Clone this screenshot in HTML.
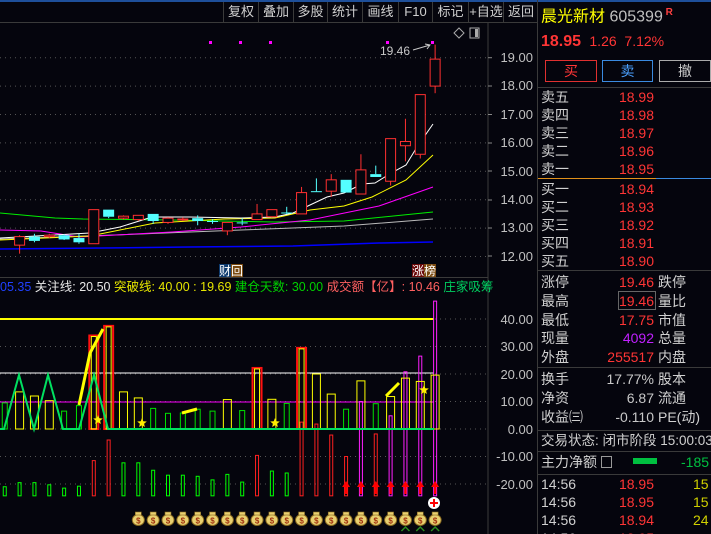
<!DOCTYPE html>
<html><head><meta charset="utf-8">
<style>
*{margin:0;padding:0;box-sizing:border-box}
html,body{width:711px;height:534px;overflow:hidden}
body{background:#05050d;position:relative;font-family:"Liberation Sans","Noto Sans CJK SC",sans-serif;color:#c8c8c8}
.a{position:absolute;white-space:nowrap;line-height:1}
.tb{position:absolute;top:2px;height:20px;font-size:13px;color:#d0d0d0;line-height:20px;text-align:center;border-left:1px solid #3a3a3a;white-space:nowrap}
.lab{position:absolute;left:541px;font-size:14px;color:#d0d0d0;line-height:1;white-space:nowrap}
.val{position:absolute;right:57px;font-size:14px;line-height:1;text-align:right;white-space:nowrap}
.lab2{position:absolute;left:658px;font-size:14px;color:#d0d0d0;line-height:1;white-space:nowrap}
.red{color:#ff3535}
</style></head><body>
<div class="a" style="left:0;top:0;width:711px;height:2px;background:#1e4f9a"></div>
<div class="a" style="left:0;top:22px;width:538px;height:1px;background:#3a3a3a"></div>
<div class="tb" style="left:223px;width:35px">复权</div>
<div class="tb" style="left:258px;width:35px">叠加</div>
<div class="tb" style="left:293px;width:34px">多股</div>
<div class="tb" style="left:327px;width:35px">统计</div>
<div class="tb" style="left:362px;width:36px">画线</div>
<div class="tb" style="left:398px;width:34px">F10</div>
<div class="tb" style="left:432px;width:36px">标记</div>
<div class="tb" style="left:468px;width:35px">+自选</div>
<div class="tb" style="left:503px;width:35px">返回</div>

<svg class="a" style="left:0;top:0" width="538" height="534" id="sv">
<line x1="488" y1="23" x2="488" y2="534" stroke="#3a3a3a"/>
<line x1="537.5" y1="0" x2="537.5" y2="534" stroke="#3a3a3a"/>
<line x1="0" y1="277.5" x2="488" y2="277.5" stroke="#3a3a3a"/>
<g stroke="#555" stroke-dasharray="1,4">
<line x1="0" y1="57.7" x2="488" y2="57.7"/><line x1="0" y1="86.1" x2="488" y2="86.1"/><line x1="0" y1="114.5" x2="488" y2="114.5"/><line x1="0" y1="142.9" x2="488" y2="142.9"/><line x1="0" y1="171.3" x2="488" y2="171.3"/><line x1="0" y1="199.7" x2="488" y2="199.7"/><line x1="0" y1="228.1" x2="488" y2="228.1"/><line x1="0" y1="256.5" x2="488" y2="256.5"/>
<line x1="0" y1="319" x2="488" y2="319"/><line x1="0" y1="346.5" x2="488" y2="346.5"/><line x1="0" y1="374" x2="488" y2="374"/><line x1="0" y1="401.5" x2="488" y2="401.5"/><line x1="0" y1="429" x2="488" y2="429"/><line x1="0" y1="456.5" x2="488" y2="456.5"/><line x1="0" y1="484" x2="488" y2="484"/>
</g>
<g fill="#c0c0c0" font-size="13" text-anchor="end" font-family="Liberation Sans">
<text x="533" y="62">19.00</text><text x="533" y="90">18.00</text><text x="533" y="119">17.00</text><text x="533" y="147">16.00</text><text x="533" y="176">15.00</text><text x="533" y="204">14.00</text><text x="533" y="232">13.00</text><text x="533" y="261">12.00</text>
<text x="533" y="324">40.00</text><text x="533" y="351">30.00</text><text x="533" y="379">20.00</text><text x="533" y="406">10.00</text><text x="533" y="434">0.00</text><text x="533" y="461">-10.00</text><text x="533" y="489">-20.00</text>
</g>
<g stroke="#888"><line x1="488" y1="57.7" x2="492" y2="57.7"/><line x1="488" y1="86" x2="492" y2="86"/><line x1="488" y1="114.5" x2="492" y2="114.5"/><line x1="488" y1="143" x2="492" y2="143"/><line x1="488" y1="171" x2="492" y2="171"/><line x1="488" y1="200" x2="492" y2="200"/><line x1="488" y1="228" x2="492" y2="228"/><line x1="488" y1="256" x2="492" y2="256"/></g>
<polyline fill="none" stroke="#0000ff" stroke-width="1.5" points="0,249 103,248 189,247 293,246 379,243 433,242"/>
<polyline fill="none" stroke="#bbbbbb" points="0,239 114,235 241,230 344,226 433,219"/>
<polyline fill="none" stroke="#00ee00" points="0,213 55,218 83,219 172,220 275,222 344,221 433,212"/>
<polyline fill="none" stroke="#ff00ff" points="0,230 41,231 79,237 172,232 241,227 310,220 379,206 433,187"/>
<polyline fill="none" stroke="#ffff00" points="0,240 90,236 155,223 224,219 275,218 310,210 344,206 372,197 406,180 433,155"/>
<polyline fill="none" stroke="#ffffff" points="0,238 90,233 120,227 152,217 189,217 241,218 275,217 293,213 310,205 327,197 344,193 362,184 375,183 393,172 406,165 417,147 433,124"/>
<g id="cd"></g>
<g fill="#ff00ff"><rect x="209" y="41" width="3" height="3"/><rect x="239" y="41" width="3" height="3"/><rect x="269" y="41" width="3" height="3"/><rect x="386" y="41" width="3" height="3"/><rect x="431" y="41" width="3" height="3"/></g>
<text x="380" y="55" font-size="12" fill="#c8c8c8" font-family="Liberation Sans">19.46</text>
<path d="M413 50 L430 45 M425 44 L430 45 L427 49" stroke="#c8c8c8" fill="none"/>
<path d="M459 28 L464 33 L459 38 L454 33Z" stroke="#aaa" fill="none"/>
<rect x="470" y="28" width="9" height="10" stroke="#aaa" fill="none"/><rect x="475" y="29" width="3" height="8" fill="#aaa"/>
<rect x="219" y="264" width="12" height="13" fill="#0d3a6e"/><rect x="231" y="264" width="12" height="13" fill="#7a4a10"/>
<text x="219" y="275" font-size="12" fill="#fff" font-family="Noto Sans CJK SC">财回</text>
<rect x="412" y="264" width="12" height="13" fill="#6a0808"/><rect x="424" y="264" width="12" height="13" fill="#7a4a10"/>
<text x="412" y="275" font-size="12" fill="#fff" font-family="Noto Sans CJK SC">涨榜</text>
<line x1="0" y1="319" x2="434" y2="319" stroke="#ffff00" stroke-width="2"/>
<line x1="0" y1="373" x2="434" y2="373" stroke="#ffffff"/>
<line x1="0" y1="402" x2="434" y2="402" stroke="#ff00ff"/>
<g id="br"></g>
<polyline fill="none" stroke="#00e060" stroke-width="2" points="0,429 4,429 19,375 34,429 48,375 63,429 79,429 94,375 108,429 434,429"/>
<g stroke="#ffff00" stroke-width="3" fill="none"><polyline points="79,405 90,353 103,329"/><polyline points="182,413 197,409"/><polyline points="386,396 399,383"/></g>
<g id="st" fill="#ffee00"></g>
<g id="mb"></g>
<circle cx="434" cy="503" r="6" fill="#fff"/><path d="M430 503h8M434 499v8" stroke="#ff0000" stroke-width="2"/>
</svg>
<div class="a" style="left:0;top:281px;font-size:12.5px;font-family:'Liberation Sans','Noto Sans CJK SC',sans-serif"><span style="color:#2040ff">05.35</span> <span style="color:#e8e8e8">关注线: 20.50</span> <span style="color:#e6e600">突破线: 40.00 : 19.69</span> <span style="color:#00d000">建仓天数: 30.00</span> <span style="color:#ff6060">成交额【亿】: 10.46</span> <span style="color:#00d060">庄家吸筹</span></div>

<div class="a" style="left:541px;top:8px;font-size:16px;color:#ffff00">晨光新材 <span style="color:#c0c0c0">605399</span><sup style="color:#ff4040;font-size:10px;font-weight:bold"> R</sup></div>
<div class="a" style="left:541px;top:34px;font-size:16px;color:#ff3535"><b>18.95</b> <span style="font-size:14px">&nbsp;1.26 &nbsp;7.12%</span></div>
<div class="a" style="left:545px;top:60px;width:52px;height:22px;border:1px solid #e03030;color:#ff3535;font-size:14px;text-align:center;line-height:20px">买</div>
<div class="a" style="left:602px;top:60px;width:51px;height:22px;border:1px solid #3a8ae0;color:#4aa0ff;font-size:14px;text-align:center;line-height:20px">卖</div>
<div class="a" style="left:659px;top:60px;width:52px;height:22px;border:1px solid #aaa;color:#ccc;font-size:14px;text-align:center;line-height:20px">撤</div>
<div class="a" style="left:538px;top:87px;width:173px;height:1px;background:#3a3a3a"></div>
<div class="lab" style="top:90px">卖五</div><div class="val red" style="top:90px">18.99</div>
<div class="lab" style="top:108px">卖四</div><div class="val red" style="top:108px">18.98</div>
<div class="lab" style="top:126px">卖三</div><div class="val red" style="top:126px">18.97</div>
<div class="lab" style="top:144px">卖二</div><div class="val red" style="top:144px">18.96</div>
<div class="lab" style="top:162px">卖一</div><div class="val red" style="top:162px">18.95</div>
<div class="a" style="left:538px;top:178px;width:118px;height:1px;background:#e0901a"></div>
<div class="a" style="left:656px;top:178px;width:55px;height:1px;background:#3a8ae0"></div>
<div class="lab" style="top:182px">买一</div><div class="val red" style="top:182px">18.94</div>
<div class="lab" style="top:200px">买二</div><div class="val red" style="top:200px">18.93</div>
<div class="lab" style="top:218px">买三</div><div class="val red" style="top:218px">18.92</div>
<div class="lab" style="top:236px">买四</div><div class="val red" style="top:236px">18.91</div>
<div class="lab" style="top:254px">买五</div><div class="val red" style="top:254px">18.90</div>
<div class="a" style="left:538px;top:270px;width:173px;height:1px;background:#3a3a3a"></div>
<div class="lab" style="top:275px">涨停</div><div class="val red" style="top:275px">19.46</div><div class="lab2" style="top:275px">跌停</div>
<div class="lab" style="top:294px">最高</div><div class="val red" style="top:294px">19.46</div><div class="lab2" style="top:294px">量比</div>
<div class="a" style="left:618px;top:291px;width:38px;height:19px;border:1px solid #666"></div>
<div class="lab" style="top:313px">最低</div><div class="val red" style="top:313px">17.75</div><div class="lab2" style="top:313px">市值</div>
<div class="lab" style="top:331px">现量</div><div class="val" style="top:331px;color:#c020ff">4092</div><div class="lab2" style="top:331px">总量</div>
<div class="lab" style="top:350px">外盘</div><div class="val red" style="top:350px">255517</div><div class="lab2" style="top:350px">内盘</div>
<div class="a" style="left:538px;top:367px;width:173px;height:1px;background:#3a3a3a"></div>
<div class="lab" style="top:372px">换手</div><div class="val" style="top:372px">17.77%</div><div class="lab2" style="top:372px">股本</div>
<div class="lab" style="top:391px">净资</div><div class="val" style="top:391px">6.87</div><div class="lab2" style="top:391px">流通</div>
<div class="lab" style="top:410px">收益㈢</div><div class="val" style="top:410px">-0.110</div><div class="lab2" style="top:410px">PE(动)</div>
<div class="a" style="left:538px;top:430px;width:173px;height:1px;background:#3a3a3a"></div>
<div class="lab" style="top:434px;font-size:13.5px">交易状态: 闭市阶段 15:00:03</div>
<div class="a" style="left:538px;top:451px;width:173px;height:1px;background:#3a3a3a"></div>
<div class="lab" style="top:455px">主力净额</div>
<div class="a" style="left:601px;top:456px;width:11px;height:12px;border:1px solid #999"></div>
<div class="a" style="left:633px;top:458px;width:24px;height:6px;background:#00c040"></div>
<div class="a" style="left:681px;top:455px;font-size:14px;color:#00c040">-185</div>
<div class="a" style="left:538px;top:474px;width:173px;height:1px;background:#3a3a3a"></div>
<div class="lab" style="top:477px">14:56</div><div class="val red" style="top:477px">18.95</div><div class="a" style="left:693px;top:477px;font-size:14px;color:#d0d000">15</div>
<div class="lab" style="top:495px">14:56</div><div class="val red" style="top:495px">18.95</div><div class="a" style="left:693px;top:495px;font-size:14px;color:#d0d000">15</div>
<div class="lab" style="top:513px">14:56</div><div class="val red" style="top:513px">18.94</div><div class="a" style="left:693px;top:513px;font-size:14px;color:#d0d000">24</div>
<div class="lab" style="top:531px">14:56</div><div class="val red" style="top:531px">18.95</div>

<script>
var NS="http://www.w3.org/2000/svg";
function el(p,t,a){var e=document.createElementNS(NS,t);for(var k in a)e.setAttribute(k,a[k]);document.getElementById(p).appendChild(e);return e;}
function X(i){return 19.6+14.84*i}
function Y(p){return 57.7+(19-p)*28.4}
function V(v){return 429-v*2.75}
var C=[[12.4,12.7,12.75,12.1],[12.7,12.55,12.8,12.5],[12.7,12.75,12.8,12.65],[12.75,12.6,12.78,12.58],[12.65,12.5,12.8,12.45],[12.45,13.65,13.65,12.45],[13.65,13.4,13.65,13.35],[13.35,13.42,13.45,13.3],[13.3,13.45,13.45,13.25],[13.5,13.25,13.5,13.15],[13.2,13.35,13.38,13.15],[13.3,13.32,13.38,13.25],[13.35,13.25,13.45,13.1],[13.25,13.24,13.32,13.15],[12.9,13.2,13.2,12.75],[13.2,13.19,13.35,13.1],[13.3,13.5,13.85,13.3],[13.4,13.65,13.65,13.38],[13.55,13.54,13.75,13.5],[13.5,14.25,14.45,13.5],[14.3,14.29,14.75,14.3],[14.3,14.7,14.9,14.1],[14.7,14.25,14.7,14.25],[14.2,15.05,15.6,14.2],[14.9,14.8,15.2,14.8],[14.65,16.15,16.15,14.5],[15.9,16.05,16.85,15.35],[15.6,17.7,17.7,15.45],[18.0,18.95,19.46,17.75]];
C.forEach(function(c,i){var x=X(i),up=c[1]>=c[0],col=up?"#ff3030":"#54ffff";
var t=Y(Math.max(c[0],c[1])),b=Y(Math.min(c[0],c[1]));
el("cd","line",{x1:x,y1:Y(c[2]),x2:x,y2:t,stroke:col});
el("cd","line",{x1:x,y1:b,x2:x,y2:Y(c[3]),stroke:col});
var h=Math.max(b-t,1);
if(up)el("cd","rect",{x:x-5,y:t,width:10,height:h,fill:"#05050d",stroke:col});
else el("cd","rect",{x:x-5.5,y:t,width:11,height:h,fill:col});
});
var U=[[-1,"G",9.5],[0,"Y",13.5],[1,"Y",12],[2,"Y",10.3],[3,"G",6.5],[4,"G",8.5],[5,"R",34],[6,"R",37.5],[7,"Y",13.5],[8,"Y",11.3],[9,"G",7.5],[10,"G",5.7],[11,"G",5.8],[12,"G",7.2],[13,"G",6.5],[14,"Y",10.7],[15,"G",6.7],[16,"R",22.2],[17,"Y",10.8],[18,"G",9.3],[19,"R",29.5],[20,"Y",20],[21,"Y",12.7],[22,"G",7.2],[23,"Y",17.5],[24,"G",9.2],[25,"Y",11.8],[26,"Y",18.5],[27,"Y",17.3],[28,"Y",19.6]];
var L=[[-1,"G",-21],[0,"G",-19.5],[1,"G",-19.5],[2,"G",-20.3],[3,"G",-21.5],[4,"G",-20.8],[5,"r",-11.5],[6,"r",-4],[7,"G",-12.3],[8,"G",-12.3],[9,"G",-15],[10,"G",-16.8],[11,"G",-16.8],[12,"G",-17.2],[13,"G",-18.5],[14,"G",-16.5],[15,"G",-19.3],[16,"r",-9.6],[17,"G",-15.3],[18,"G",-16],[19,"r",2.5],[20,"r",1.8],[21,"r",-2.2],[22,"r",-10],[23,"m",10],[24,"r",-1.8],[25,"m",4.8],[26,"m",20.8],[27,"m",26.5],[28,"m",46.5]];
L.forEach(function(d){var x=X(d[0]),col={G:"#00ff00",r:"#ff2020",m:"#ff20ff"}[d[1]];
el("br","rect",{x:x-1.5,y:V(d[2]),width:3,height:V(-24.3)-V(d[2]),fill:"none",stroke:col});});
U.forEach(function(d){var x=X(d[0]),t=V(d[2]);
if(d[1]=="G")el("br","rect",{x:x-2.5,y:t,width:5,height:429-t,fill:"none",stroke:"#00e000"});
else if(d[1]=="Y")el("br","rect",{x:x-4,y:t,width:8,height:429-t,fill:"none",stroke:"#ffff00"});
else{el("br","rect",{x:x-4.5,y:t,width:9,height:429-t,fill:"none",stroke:"#ff1010",'stroke-width':2});
el("br","rect",{x:x-2.5,y:t+1,width:5,height:428-t,fill:"none",stroke:"#ffff00"});}
});
for(var i=22;i<=28;i++){var x=X(i);el("br","path",{d:"M"+(x-4)+" 487 L"+x+" 481 L"+(x+4)+" 487 L"+(x+1.2)+" 487 L"+(x+1.2)+" 494 L"+(x-1.2)+" 494 L"+(x-1.2)+" 487Z",fill:"#ff0000"});}
function star(cx,cy,r){var p=[];for(var k=0;k<10;k++){var a=Math.PI/2+k*Math.PI/5,rr=k%2?r*0.45:r;p.push((cx+rr*Math.cos(a)).toFixed(1)+","+(cy-rr*Math.sin(a)).toFixed(1));}el("st","polygon",{points:p.join(" ")});}
star(98,420,5);star(142,423,5);star(275,423,5);star(424,390,5);
for(var i=8;i<=28;i++){var x=X(i);
el("mb","ellipse",{cx:x,cy:520,rx:6,ry:5.5,fill:"#e8d070",stroke:"#8a6a20"});
el("mb","rect",{x:x-3,y:512,width:6,height:3,fill:"#e8d070",stroke:"#8a6a20",'stroke-width':0.6});
var t=el("mb","text",{x:x,y:523.5,'font-size':8,'text-anchor':'middle',fill:'#a03010','font-family':'Liberation Sans','font-weight':'bold'});t.textContent="$";
if(i>=26)el("mb","path",{d:"M"+(x-4)+" 531 L"+x+" 527 L"+(x+4)+" 531",stroke:"#2a8a20",fill:"none",'stroke-width':1.5});}
</script>
</body></html>
